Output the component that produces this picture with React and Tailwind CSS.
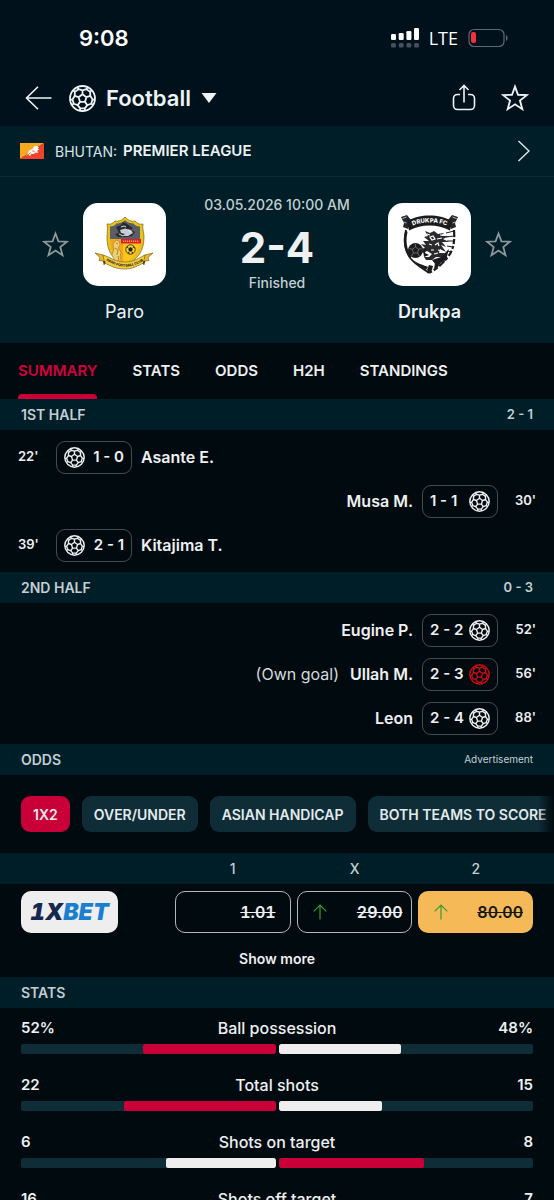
import React, { useState } from 'react';

const firstHalf = [
  { minute: "22'", score: '1 - 0', player: 'Asante E.', side: 'home' },
  { minute: "30'", score: '1 - 1', player: 'Musa M.', side: 'away' },
  { minute: "39'", score: '2 - 1', player: 'Kitajima T.', side: 'home' },
];

const secondHalf = [
  { minute: "52'", score: '2 - 2', player: 'Eugine P.', side: 'away' },
  { minute: "56'", score: '2 - 3', player: 'Ullah M.', side: 'away', note: '(Own goal)', own: true },
  { minute: "88'", score: '2 - 4', player: 'Leon', side: 'away' },
];

const stats = [
  { name: 'Ball possession', home: 52, away: 48, unit: '%' },
  { name: 'Total shots', home: 22, away: 15 },
  { name: 'Shots on target', home: 6, away: 8 },
  { name: 'Shots off target', home: 16, away: 7 },
];

const tabs = ['SUMMARY', 'STATS', 'ODDS', 'H2H', 'STANDINGS'];
const markets = ['1X2', 'OVER/UNDER', 'ASIAN HANDICAP', 'BOTH TEAMS TO SCORE'];

// --- ICONS ---
const polar = (r, deg) => {
  const a = ((deg - 90) * Math.PI) / 180;
  return `${(12 + r * Math.cos(a)).toFixed(2)} ${(12 + r * Math.sin(a)).toFixed(2)}`;
};

// Seams of the ball: centre pentagon, five spokes and the outer panels
const ballPath = [0, 72, 144, 216, 288]
  .map(
    (d) =>
      `M${polar(3.7, d)}L${polar(3.7, d + 72)}` +
      `M${polar(3.7, d)}L${polar(7.3, d)}` +
      `M${polar(10.9, d - 24)}L${polar(9, d - 23)}L${polar(7.3, d)}L${polar(9, d + 23)}L${polar(10.9, d + 24)}` +
      `M${polar(9, d + 23)}L${polar(9, d + 49)}`
  )
  .join('');

const Ball = ({ className }) => (
  <svg viewBox="0 0 24 24" className={className} fill="none" stroke="currentColor" strokeWidth="1.6" strokeLinejoin="round">
    <circle cx="12" cy="12" r="11.1" />
    <path d={ballPath} />
  </svg>
);

const Star = ({ className }) => (
  <svg viewBox="0 0 26 26" className={className} fill="none" stroke="currentColor" strokeWidth="1.7" strokeLinejoin="miter">
    <path d="M13 2.4l2.8 7.6 8.2.3-6.4 5.1 2.2 8L13 18.8l-6.8 4.6 2.2-8L2 10.3l8.2-.3z" />
  </svg>
);

const UpArrow = () => (
  <svg viewBox="0 0 14 16" className="h-4 w-3.5 text-[#2fa02f]" fill="none" stroke="currentColor" strokeWidth="1.2">
    <path d="M7 15.5V1M.7 7.3L7 1l6.3 6.3" />
  </svg>
);

const Flag = () => (
  <svg viewBox="0 0 24 16" className="h-4 w-6">
    <path d="M0 0h24L0 16z" fill="#f6a821" />
    <path d="M24 0v16H0z" fill="#f0432e" />
    <path d="M5 13l3-2.5 1-3L12.500 6l1.500-2.500 2.500-.8 2.500 1.600-1.500 1 1.800 1.200-2 1.300.6 2.200-2.500-.6-1.700 1.600-2.400-.3-.9 2-1.600-.2.2-1.700z" fill="#fff" />
    <path d="M12 8l3 .3M9 11l2-1.500" stroke="#f0432e" strokeWidth=".7" />
  </svg>
);

const ParoCrest = () => (
  <svg viewBox="0 0 83 83" className="size-full" role="img" aria-label="Paro crest">
    <path d="M24 21c4 1 6-1 8-3 4 1 7-1 10-4 3 3 6 5 10 4 2 2 4 4 8 3-1 5 1 8 1 13 0 14-6 22-19 29-13-7-18-15-18-29 0-5 1-8 0-13z" fill="#e6c21c" stroke="#8a6f17" strokeWidth=".8" />
    <path d="M27 23.500c3 0 5-1 6.500-3 3 0 6-1 8.500-3.300 2.500 2.300 5.500 3.300 8.500 3.300 1.500 2 3.500 3 6.500 3V36H27z" fill="#5b5e66" />
    <path d="M33 24l5-2 2-3 4 2 6 4-2 2 4 2-3 4-6 1h-8l-3-3 4-1z" fill="#282b31" />
    <path d="M37 27l5-1.500 6 1.500 2 3-5 3h-6l3-2-4-1z" fill="#c8ccd2" />
    <path d="M38 24l3-1 2 1M36 31l4 2M45 27l3 2" stroke="#eef0f3" strokeWidth=".9" fill="none" />
    <path d="M27 36h30.500c-.5 12-6 19-15.500 24.500C32.500 55 27.500 48 27 36z" fill="#f5a41b" />
    <path d="M40 40h17c-1.500 9-6.500 15-14 20h-3z" fill="#fbc51d" />
    <path d="M38 36h20v4.500H38z" fill="#d9202c" />
    <path d="M40 38.300h16" stroke="#f3a04a" strokeWidth="1.400" strokeDasharray="1.200 .8" />
    <path d="M30 41l3-4 3 1 1 4-2 3 3 4-1 5 2 7-6-1-4-8 2-6z" fill="#eccf75" stroke="#a77d22" strokeWidth=".6" />
    <path d="M33 40l2 1M32 45l3 2-1 5M35 53l1 5" stroke="#8d6717" strokeWidth=".7" fill="none" />
    <circle cx="47.500" cy="46.500" r="4.700" fill="#f9d233" stroke="#222" strokeWidth=".8" />
    <path d="M47.500 44l2.300 1.700-.9 2.700h-2.800l-.9-2.700zM43.200 45l1.600-2 .7 1.500zM51.800 45l-1.600-2-.7 1.500zM45 50.500l.3-2 1.600 1.800zM50 50.500l-.3-2-1.600 1.800z" fill="#222" />
    <path d="M12 50l8 2 5 4-4 6-1-4-4-.5 1-3zM70 50l-8 2-5 4 4 6 1-4 4-.5-1-3z" fill="#edba26" stroke="#80621a" strokeWidth=".7" />
    <path d="M20 52c7 2 12 7 22 7s15-5 20-7l-1.500 8C54 63 50 66 41.500 66S28 63 21.500 60z" fill="#f3cd40" stroke="#80621a" strokeWidth=".7" />
    <path id="paro-ribbon" d="M22.500 57.500C30 60.500 34 63.700 42 63.700s13-3 19-6.200" fill="none" />
    <text fontSize="3.500" fontWeight="800" fill="#2a2210" fontFamily="Inter, sans-serif">
      <textPath href="#paro-ribbon" startOffset="50%" textAnchor="middle">PARO FOOTBALL CLUB</textPath>
    </text>
    <path d="M20 58l2 3.500.5-3zM62.500 58l-2 3.500-.5-3z" fill="#3b2c0c" />
  </svg>
);

const DrukpaCrest = () => (
  <svg viewBox="0 0 83 83" className="size-full" role="img" aria-label="Drukpa crest">
    <path d="M18 27c-3 12-1 21 5 29 5 6 11 9 18 14" fill="none" stroke="#1b1b1d" strokeWidth="1.800" />
    <path d="M66 27c1 13-1 21-7 28-4 5-10 11-18 15" fill="none" stroke="#1b1b1d" strokeWidth="2.200" strokeDasharray="7 2 5 2 3 2 6 2 4 1" />
    <path d="M17.500 27c-3 11-2 20 4 28l2-1c-5-8-6-16-4-25z" fill="#1b1b1d" />
    <path d="M13 14l6-2 4 5-3 9-5-2 1-4z" fill="#26262a" />
    <path d="M70 14l-6-2-4 5 3 9 5-2-1-4z" fill="#26262a" />
    <path d="M14.500 15.500l4-1.500M15.500 19l3 1M68.500 15.500l-4-1.500M67.500 19l-3 1" stroke="#ddd" strokeWidth=".8" />
    <path d="M19 18c8-4 14-5.500 22.500-5.500S56 14 64 18l-2 9.500C55 24 49 22.500 41.500 22.500S28 24 21 27.500z" fill="#1b1b1d" />
    <path id="drukpa-ribbon" d="M22 24c6-3.500 12-4.500 19.500-4.500s13 1 20 4.500" fill="none" />
    <text fontSize="6" fontWeight="800" fill="#fff" fontFamily="Inter, sans-serif">
      <textPath href="#drukpa-ribbon" startOffset="50%" textAnchor="middle">DRUKPA FC</textPath>
    </text>
    <circle cx="27.500" cy="47.500" r="7.500" fill="#1b1b1d" />
    <path d="M27.500 44l3.200 2.300-1.200 3.700h-4l-1.200-3.700zM27.500 44v-3M30.700 46.300l3-1M29.500 50l2 3M25.500 50l-2 3M24.300 46.300l-3-1" fill="none" stroke="#999" strokeWidth=".6" />
    <path d="M37 28l5 2 4-2 4 3 6-1-3 3 8 0-6 3 6 3-7 0 4 5-5-2 5 7-6-3-1 4 6 0-3 4-6 0-4 3-6 0-2-3 5 0 3-3-5-3-4 2-3-4 5-1-4-4 5 1-3-4 6 0-5-4 4-1z" fill="#2a2a2d" />
    <path d="M42 34l3-1 2 3-3 1zM49 36l5-1M47 42l3-2 1 3M41 41l3 1M50 47l4 1M43 47l3 0M39 31l3 1M52 32l3 0M46 51l4-1" fill="none" stroke="#fff" strokeWidth="1.200" />
    <path d="M35 47l3-2-1 5 4 2-5 2zM44 57l9-3 8-8-3 11-10 5z" fill="#1b1b1d" />
    <path d="M25 57c5 4 11 5 15 7l-2 3c-5-3-9-5-13-10zM41 62l4 1-1 4-3 3-2-3zM47 60l6-1-3 5-4 2z" fill="#1b1b1d" />
    <path d="M58 30l8-2M58 34l8-1M59 38l7 0M59 43l6 1M59 48l4 1" stroke="#1b1b1d" strokeWidth="1" />
  </svg>
);

// --- PAGE PARTS ---
const StatusBar = () => (
  <div className="flex h-[70px] items-center justify-between bg-[#00111b] pl-[79px] pr-[46px] pt-1.5 text-white">
    <span className="text-[22px] font-semibold">9:08</span>
    <div className="flex items-center gap-2.5">
      <svg viewBox="0 0 28 20" className="h-5 w-7" aria-hidden="true">
        <g fill="#fff">
          <rect x="0" y="6" width="5" height="6" rx="1.200" />
          <rect x="7.700" y="5" width="5" height="7" rx="1.200" />
          <rect x="15.400" y="3" width="5" height="9" rx="1.200" />
          <rect x="23" y="0" width="5" height="12" rx="1.200" />
        </g>
        <g fill="#45515a">
          <rect x="0" y="15" width="5" height="4.500" rx="1.500" />
          <rect x="7.700" y="15" width="5" height="4.500" rx="1.500" />
          <rect x="15.400" y="15" width="5" height="4.500" rx="1.500" />
          <rect x="23" y="15" width="5" height="4.500" rx="1.500" />
        </g>
      </svg>
      <span className="font-['Open_Sans',sans-serif] text-[18px] font-medium">LTE</span>
      <svg viewBox="0 0 40 20" className="h-5 w-10" aria-hidden="true">
        <rect x="1" y="1.500" width="35" height="17" rx="5" fill="none" stroke="#5f6a71" strokeWidth="1.200" />
        <rect x="3" y="4" width="5" height="11" rx="2" fill="#f5303a" />
        <path d="M38 7c2 .8 2 5.200 0 6z" fill="#5f6a71" />
      </svg>
    </div>
  </div>
);

const Header = () => (
  <header className="flex h-14 items-center bg-[#00111b] pl-[25px] pr-[25px] text-[#eef3f5]">
    <button aria-label="Back">
      <svg viewBox="0 0 27 24" className="h-6 w-[27px]" fill="none" stroke="currentColor" strokeWidth="1.600">
        <path d="M26.500 12H1.500M13 .8L1.500 12 13 23.200" />
      </svg>
    </button>
    <button className="ml-[17px] flex items-center">
      <Ball className="size-[27px]" />
      <span className="ml-2.5 text-[22px] font-semibold">Football</span>
      <svg viewBox="0 0 16 10" className="ml-2.5 h-2.5 w-4">
        <path d="M.5 0h15L8 10z" fill="currentColor" />
      </svg>
    </button>
    <div className="ml-auto flex items-center gap-[25px]">
      <button aria-label="Share">
        <svg viewBox="0 0 24 28" className="h-7 w-6" fill="none" stroke="currentColor" strokeWidth="1.600">
          <path d="M8 10.500H5.500a4 4 0 00-4 4V21.500a4 4 0 004 4h13a4 4 0 004-4v-7a4 4 0 00-4-4H16M12 18.500V2M7.500 6L12 1.500 16.500 6" />
        </svg>
      </button>
      <button aria-label="Add to favourites">
        <Star className="size-7" />
      </button>
    </div>
  </header>
);

const Team = ({ name, crest, winner, reverse }) => (
  <div className={`flex items-start gap-[14px] ${reverse ? 'flex-row-reverse' : ''}`}>
    <button aria-label={`Follow ${name}`} className="flex h-[83px] items-center text-[#8e979b]">
      <Star className="size-[27px]" />
    </button>
    <div className="flex flex-col items-center">
      <div className="size-[83px] overflow-hidden rounded-[15px] bg-white">{crest}</div>
      <p className={`mt-3 text-[18px] leading-7 text-[#eef3f5] ${winner ? 'font-semibold' : 'font-normal'}`}>{name}</p>
    </div>
  </div>
);

const Band = ({ title, right, small }) => (
  <div className="flex h-[31px] items-center justify-between bg-[#001e28] px-[21px] text-[#c4ced2]">
    <h2 className="text-[14px] font-semibold">{title}</h2>
    {right && <span className={small ? 'text-[10px]' : 'text-[13px] font-semibold'}>{right}</span>}
  </div>
);

const Goal = ({ goal }) => {
  const home = goal.side === 'home';
  return (
    <li className={`flex h-11 items-center text-[#eef0f1] ${home ? 'pl-[18px]' : 'flex-row-reverse pr-[18px]'}`}>
      <span className={`w-[38px] text-[13px] font-semibold ${home ? '' : 'text-right'}`}>{goal.minute}</span>
      <span
        className={`flex h-[33px] w-[76px] items-center justify-between rounded-[9px] border border-[#454c51] px-[7px] ${home ? '' : 'flex-row-reverse'}`}
      >
        <Ball className={`size-[21px] ${goal.own ? 'text-[#c80d12]' : ''}`} />
        <span className="text-[15px] font-semibold">{goal.score}</span>
      </span>
      <span className="mx-[9px] text-[16px] font-semibold">{goal.player}</span>
      {goal.note && <span className="mr-0.5 text-[16px] text-[#d5dadd]">{goal.note}</span>}
    </li>
  );
};

const StatRow = ({ stat }) => {
  const total = stat.home + stat.away;
  const unit = stat.unit || '';
  const barColor = (mine, other) => (mine > other ? 'bg-[#c80037]' : 'bg-[#eeeeee]');

  return (
    <div className="mb-5">
      <div className="mb-[5px] flex h-[22px] items-center justify-between text-[15px] font-semibold text-[#eef0f1]">
        <span className="flex-1">{stat.home}{unit}</span>
        <span className="text-[16px] font-medium">{stat.name}</span>
        <span className="flex-1 text-right">{stat.away}{unit}</span>
      </div>
      <div className="grid grid-cols-2 gap-[3px]">
        <div className="flex h-2.5 justify-end overflow-hidden rounded-xs bg-[#0f2d37]">
          <div className={`rounded-xs ${barColor(stat.home, stat.away)}`} style={{ width: `${(stat.home / total) * 100}%` }} />
        </div>
        <div className="flex h-2.5 overflow-hidden rounded-xs bg-[#0f2d37]">
          <div className={`rounded-xs ${barColor(stat.away, stat.home)}`} style={{ width: `${(stat.away / total) * 100}%` }} />
        </div>
      </div>
    </div>
  );
};

const OddsTable = () => (
  <table className="w-full table-fixed text-[#c4ced2]">
    <thead>
      <tr className="h-[31px] bg-[#001e28] text-[14px]">
        <th className="w-[31%]" aria-label="Bookmaker" />
        <th className="w-[22%] font-medium">1</th>
        <th className="w-[22%] font-medium">X</th>
        <th className="w-[25%] pl-[3px] pr-[21px] font-medium">2</th>
      </tr>
    </thead>
    <tbody className="text-[16px] font-semibold tabular-nums text-[#eef0f1]">
      <tr>
        <td className="pl-[21px] pt-[7px]">
          <a href="#1xbet" className="flex h-[42px] w-[97px] items-center justify-center rounded-[10px] bg-[#eeeeee] text-[23px] font-black italic">
            <span className="text-[#15294f]">1X</span>
            <span className="text-[#1b7fd0]">BET</span>
          </a>
        </td>
        <td className="px-[3px] pt-[7px]">
          <button className="flex h-[42px] w-full items-center justify-end rounded-[10px] border border-[#b4b8ba] px-[14px] line-through">1.01</button>
        </td>
        <td className="px-[3px] pt-[7px]">
          <button className="flex h-[42px] w-full items-center justify-between rounded-[10px] border border-[#b4b8ba] pl-[15px] pr-[9px]">
            <UpArrow />
            <span className="line-through">29.00</span>
          </button>
        </td>
        <td className="pl-[3px] pr-[21px] pt-[7px]">
          <button className="flex h-[42px] w-full items-center justify-between rounded-[10px] bg-[#f6b958] pl-4 pr-2.5 text-[#14181a]">
            <UpArrow />
            <span className="line-through">80.00</span>
          </button>
        </td>
      </tr>
    </tbody>
  </table>
);

const App = () => {
  const [tab, setTab] = useState('SUMMARY');
  const [market, setMarket] = useState('1X2');

  return (
    <div className="h-screen overflow-hidden bg-[#010a0f] font-[Inter,sans-serif]">
      <StatusBar />
      <Header />

      {/* League */}
      <a href="#league" className="flex h-[51px] items-center border-b border-[#0b2a33] bg-[#001e28] pl-5 pr-6 text-[14px] text-[#dbe3e6]">
        <Flag />
        <span className="ml-[11px]">BHUTAN:</span>
        <span className="ml-1.5 text-[15px] font-semibold text-[#eef3f5]">PREMIER LEAGUE</span>
        <svg viewBox="0 0 13 22" className="ml-auto h-[22px] w-[13px]" fill="none" stroke="currentColor" strokeWidth="1.500">
          <path d="M1.500 1L12 11 1.500 21" />
        </svg>
      </a>

      {/* Match */}
      <section className="flex items-start justify-between bg-[#001e28] px-[42px] pb-[17px] pt-[26px]">
        <Team name="Paro" crest={<ParoCrest />} />
        <div className="-mt-2 flex flex-col items-center whitespace-nowrap text-[#c4ced2]">
          <p className="text-[14px] font-medium leading-5">03.05.2026 10:00 AM</p>
          <p className="mt-2 text-[42px] font-bold leading-[50px] text-[#eef0f1]">2-4</p>
          <p className="text-[14px] font-medium leading-5">Finished</p>
        </div>
        <Team name="Drukpa" crest={<DrukpaCrest />} winner reverse />
      </section>

      {/* Tabs */}
      <nav className="flex h-14 gap-[35px] pl-[18px]">
        {tabs.map((t) => (
          <button
            key={t}
            onClick={() => setTab(t)}
            className={`flex flex-col justify-between pt-[17px] text-[15px] leading-[22px] font-semibold ${t === tab ? 'text-[#d3003c]' : 'text-[#eef0f1]'}`}
          >
            {t}
            {t === tab && <span className="h-[5px] w-full rounded-t-sm bg-[#c80037]" />}
          </button>
        ))}
      </nav>

      <Band title="1ST HALF" right="2 - 1" />
      <ul className="py-[5px]">
        {firstHalf.map((g) => <Goal key={g.minute} goal={g} />)}
      </ul>
      <Band title="2ND HALF" right="0 - 3" />
      <ul className="pb-1 pt-[5px]">
        {secondHalf.map((g) => <Goal key={g.minute} goal={g} />)}
      </ul>

      {/* Odds */}
      <Band title="ODDS" right="Advertisement" small />
      <div className="relative">
        <div className="flex gap-3 overflow-hidden py-[21px] pl-[21px]">
          {markets.map((m) => (
            <button
              key={m}
              onClick={() => setMarket(m)}
              className={`h-9 shrink-0 rounded-[9px] px-3 text-[14px] font-semibold text-[#e3eaed] ${m === market ? 'bg-[#c80037]' : 'bg-[#0f2d37]'}`}
            >
              {m}
            </button>
          ))}
        </div>
        <div className="absolute inset-y-0 right-0 w-4 bg-linear-to-r from-transparent to-[#010a0f]" />
      </div>
      <OddsTable />
      <div className="flex h-11 items-center justify-center pt-1.5">
        <button className="text-[14px] font-semibold text-[#eef0f1]">Show more</button>
      </div>

      {/* Stats */}
      <Band title="STATS" />
      <section className="px-[21px] pt-[9px]">
        {stats.map((s) => <StatRow key={s.name} stat={s} />)}
      </section>
    </div>
  );
};

export default App;
